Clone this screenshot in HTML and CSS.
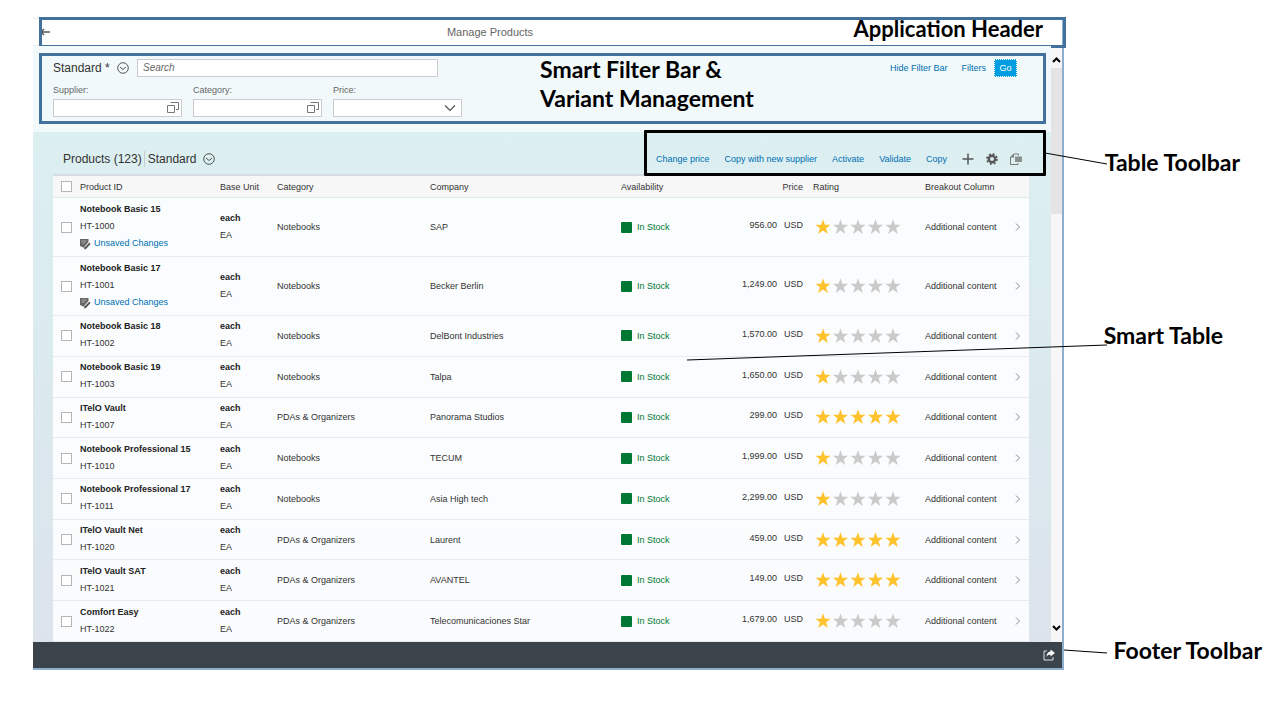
FILE: index.html
```html
<!DOCTYPE html>
<html lang="en">
<head>
<meta charset="utf-8">
<title>Manage Products</title>
<link rel="stylesheet" href="styles.css">
</head>
<body>
<svg class="defs" aria-hidden="true">
  <symbol id="star" viewBox="0 0 16 16"><path d="M8 .3 9.900 5.700H15.600L11.100 9.200 12.800 15 8 11.600 3.200 15 4.900 9.200.400 5.700H6.100Z"/></symbol>
  <symbol id="stars-1" viewBox="0 0 88 16">
    <g fill="#fec22c"><use href="#star" width="16" height="16"/></g>
    <g fill="#cacaca"><use href="#star" x="17.500" width="16" height="16"/><use href="#star" x="35" width="16" height="16"/><use href="#star" x="52.500" width="16" height="16"/><use href="#star" x="70" width="16" height="16"/></g>
  </symbol>
  <symbol id="stars-5" viewBox="0 0 88 16">
    <g fill="#fec22c"><use href="#star" width="16" height="16"/><use href="#star" x="17.500" width="16" height="16"/><use href="#star" x="35" width="16" height="16"/><use href="#star" x="52.500" width="16" height="16"/><use href="#star" x="70" width="16" height="16"/></g>
  </symbol>
  <symbol id="circle-down" viewBox="0 0 12 12"><g fill="none" stroke="#555"><circle cx="6" cy="6" r="5.300"/><path d="M3 5 6 7.500 9 5"/></g></symbol>
  <symbol id="value-help" viewBox="0 0 12 12"><path d="M.5 4.500h7v7h-7zM3.500 1.500h8v7H9" fill="none" stroke="#777"/></symbol>
  <symbol id="draft" viewBox="0 0 12 12"><path d="M0 1h8.500v3L4.500 8.500V10L0 8z" fill="#666"/><path d="M1.500 3h5M1.500 5h3.500" stroke="#aaa"/><path d="M9.500 4.500 4.500 9.500 4 11.500 6 11 10.500 6z" fill="#555"/></symbol>
  <symbol id="nav" viewBox="0 0 8 10"><path d="M2 1.500 5.500 5 2 8.500" fill="none" stroke="#8a8a8a"/></symbol>
</svg>

<div class="stage">
  <div class="app">
    <header class="app-header">
      <button class="icon-button back" aria-label="Back"><svg width="12" height="10" viewBox="0 0 12 10"><path d="M0 5h11M5 2 2 5l3 3" fill="none" stroke="#555" stroke-width="1.500"/></svg></button>
      <h1 class="app-title">Manage Products</h1>
      <div class="frame frame-header"></div>
      <span class="note note-header">Application Header</span>
    </header>

    <div class="body">
      <main class="content">
        <form class="filter-bar">
          <div class="filter-top">
            <button type="button" class="variant filter-variant">Standard *<svg class="icon-12"><use href="#circle-down"/></svg></button>
            <input class="field search" type="search" placeholder="Search" aria-label="Search">
            <div class="filter-actions">
              <button type="button" class="link-button">Hide Filter Bar</button>
              <button type="button" class="link-button">Filters</button>
              <button type="button" class="go">Go</button>
            </div>
          </div>
          <div class="filter-fields">
            <div class="filter-field">
              <label for="supplier">Supplier:</label>
              <div class="control"><input class="field" id="supplier" type="text"><svg class="icon-12 control-icon"><use href="#value-help"/></svg></div>
            </div>
            <div class="filter-field">
              <label for="category">Category:</label>
              <div class="control"><input class="field" id="category" type="text"><svg class="icon-12 control-icon"><use href="#value-help"/></svg></div>
            </div>
            <div class="filter-field">
              <label for="price">Price:</label>
              <div class="control"><select class="field" id="price"><option></option></select><svg class="icon-12 control-icon select-icon" viewBox="0 0 12 12"><path d="M1 3.500l5 5 5-5" fill="none" stroke="#555" stroke-width="1.200"/></svg></div>
            </div>
          </div>
          <div class="frame frame-filter"></div>
          <span class="note note-filter">Smart Filter Bar &amp;<br>Variant Management</span>
        </form>

        <section class="products">
          <div class="toolbar">
            <h2 class="table-title">Products (123)</h2>
            <button class="variant table-variant">Standard<svg class="icon-12"><use href="#circle-down"/></svg></button>
            <div class="toolbar-actions">
              <button class="link-button">Change price</button>
              <button class="link-button">Copy with new supplier</button>
              <button class="link-button">Activate</button>
              <button class="link-button">Validate</button>
              <button class="link-button">Copy</button>
              <div class="toolbar-icons">
                <button class="icon-button" aria-label="Add"><svg class="icon-12" viewBox="0 0 12 12"><path d="M6 .5v11M.5 6h11" stroke="#555" stroke-width="1.500"/></svg></button>
                <button class="icon-button" aria-label="Settings"><svg class="icon-12" viewBox="0 0 12 12"><circle cx="6" cy="6" r="3.200" fill="none" stroke="#555" stroke-width="2.400"/><circle cx="6" cy="6" r="5" fill="none" stroke="#555" stroke-width="1.600" stroke-dasharray="2 1.927"/></svg></button>
                <button class="icon-button" aria-label="Export"><svg class="icon-12" viewBox="0 0 12 12"><path d="M8.500 2.500V1H4L.5 4v7.500h7.500V10" fill="none" stroke="#777"/><path d="M.5 4.500H4V1z" fill="#777"/><path d="M5 3.500h7v5.500H5z" fill="#8a8f90"/></svg></button>
              </div>
            </div>
            <div class="frame frame-toolbar"></div>
          </div>
          <table class="table">
            <colgroup><col class="c-check"><col class="c-product"><col class="c-unit"><col class="c-category"><col class="c-company"><col class="c-avail"><col class="c-price"><col class="c-rating"><col class="c-extra"><col class="c-nav"></colgroup>
            <thead>
              <tr><th><input type="checkbox" class="check" aria-label="Select all"></th><th>Product ID</th><th>Base Unit</th><th>Category</th><th>Company</th><th>Availability</th><th class="head-price">Price</th><th class="head-rating">Rating</th><th>Breakout Column</th><th></th></tr>
            </thead>
            <tbody>
              <tr class="tall"><td><input type="checkbox" class="check" aria-label="Select HT-1000"></td><td class="lines"><b>Notebook Basic 15</b><span>HT-1000</span><a href="#" class="draft"><svg class="icon-12"><use href="#draft"/></svg>Unsaved Changes</a></td><td class="lines"><b>each</b><span>EA</span></td><td>Notebooks</td><td>SAP</td><td><span class="stock">In Stock</span></td><td class="price"><span>956.00</span><span>USD</span></td><td class="rating"><svg role="img" aria-label="1 of 5"><use href="#stars-1"/></svg></td><td>Additional content</td><td><svg class="nav"><use href="#nav"/></svg></td></tr>
              <tr class="tall"><td><input type="checkbox" class="check" aria-label="Select HT-1001"></td><td class="lines"><b>Notebook Basic 17</b><span>HT-1001</span><a href="#" class="draft"><svg class="icon-12"><use href="#draft"/></svg>Unsaved Changes</a></td><td class="lines"><b>each</b><span>EA</span></td><td>Notebooks</td><td>Becker Berlin</td><td><span class="stock">In Stock</span></td><td class="price"><span>1,249.00</span><span>USD</span></td><td class="rating"><svg role="img" aria-label="1 of 5"><use href="#stars-1"/></svg></td><td>Additional content</td><td><svg class="nav"><use href="#nav"/></svg></td></tr>
              <tr><td><input type="checkbox" class="check" aria-label="Select HT-1002"></td><td class="lines"><b>Notebook Basic 18</b><span>HT-1002</span></td><td class="lines"><b>each</b><span>EA</span></td><td>Notebooks</td><td>DelBont Industries</td><td><span class="stock">In Stock</span></td><td class="price"><span>1,570.00</span><span>USD</span></td><td class="rating"><svg role="img" aria-label="1 of 5"><use href="#stars-1"/></svg></td><td>Additional content</td><td><svg class="nav"><use href="#nav"/></svg></td></tr>
              <tr><td><input type="checkbox" class="check" aria-label="Select HT-1003"></td><td class="lines"><b>Notebook Basic 19</b><span>HT-1003</span></td><td class="lines"><b>each</b><span>EA</span></td><td>Notebooks</td><td>Talpa</td><td><span class="stock">In Stock</span></td><td class="price"><span>1,650.00</span><span>USD</span></td><td class="rating"><svg role="img" aria-label="1 of 5"><use href="#stars-1"/></svg></td><td>Additional content</td><td><svg class="nav"><use href="#nav"/></svg></td></tr>
              <tr><td><input type="checkbox" class="check" aria-label="Select HT-1007"></td><td class="lines"><b>ITelO Vault</b><span>HT-1007</span></td><td class="lines"><b>each</b><span>EA</span></td><td>PDAs &amp; Organizers</td><td>Panorama Studios</td><td><span class="stock">In Stock</span></td><td class="price"><span>299.00</span><span>USD</span></td><td class="rating"><svg role="img" aria-label="5 of 5"><use href="#stars-5"/></svg></td><td>Additional content</td><td><svg class="nav"><use href="#nav"/></svg></td></tr>
              <tr><td><input type="checkbox" class="check" aria-label="Select HT-1010"></td><td class="lines"><b>Notebook Professional 15</b><span>HT-1010</span></td><td class="lines"><b>each</b><span>EA</span></td><td>Notebooks</td><td>TECUM</td><td><span class="stock">In Stock</span></td><td class="price"><span>1,999.00</span><span>USD</span></td><td class="rating"><svg role="img" aria-label="1 of 5"><use href="#stars-1"/></svg></td><td>Additional content</td><td><svg class="nav"><use href="#nav"/></svg></td></tr>
              <tr><td><input type="checkbox" class="check" aria-label="Select HT-1011"></td><td class="lines"><b>Notebook Professional 17</b><span>HT-1011</span></td><td class="lines"><b>each</b><span>EA</span></td><td>Notebooks</td><td>Asia High tech</td><td><span class="stock">In Stock</span></td><td class="price"><span>2,299.00</span><span>USD</span></td><td class="rating"><svg role="img" aria-label="1 of 5"><use href="#stars-1"/></svg></td><td>Additional content</td><td><svg class="nav"><use href="#nav"/></svg></td></tr>
              <tr><td><input type="checkbox" class="check" aria-label="Select HT-1020"></td><td class="lines"><b>ITelO Vault Net</b><span>HT-1020</span></td><td class="lines"><b>each</b><span>EA</span></td><td>PDAs &amp; Organizers</td><td>Laurent</td><td><span class="stock">In Stock</span></td><td class="price"><span>459.00</span><span>USD</span></td><td class="rating"><svg role="img" aria-label="5 of 5"><use href="#stars-5"/></svg></td><td>Additional content</td><td><svg class="nav"><use href="#nav"/></svg></td></tr>
              <tr><td><input type="checkbox" class="check" aria-label="Select HT-1021"></td><td class="lines"><b>ITelO Vault SAT</b><span>HT-1021</span></td><td class="lines"><b>each</b><span>EA</span></td><td>PDAs &amp; Organizers</td><td>AVANTEL</td><td><span class="stock">In Stock</span></td><td class="price"><span>149.00</span><span>USD</span></td><td class="rating"><svg role="img" aria-label="5 of 5"><use href="#stars-5"/></svg></td><td>Additional content</td><td><svg class="nav"><use href="#nav"/></svg></td></tr>
              <tr><td><input type="checkbox" class="check" aria-label="Select HT-1022"></td><td class="lines"><b>Comfort Easy</b><span>HT-1022</span></td><td class="lines"><b>each</b><span>EA</span></td><td>PDAs &amp; Organizers</td><td>Telecomunicaciones Star</td><td><span class="stock">In Stock</span></td><td class="price"><span>1,679.00</span><span>USD</span></td><td class="rating"><svg role="img" aria-label="1 of 5"><use href="#stars-1"/></svg></td><td>Additional content</td><td><svg class="nav"><use href="#nav"/></svg></td></tr>
            </tbody>
          </table>
        </section>
      </main>
      <div class="scrollbar" aria-hidden="true">
        <svg class="arrow" viewBox="0 0 11 8"><path d="M2 6 5.500 2.500 9 6" fill="none" stroke="#000" stroke-width="2"/></svg>
        <div class="track"><div class="thumb"></div></div>
        <svg class="arrow" viewBox="0 0 11 8"><path d="M2 2 5.500 5.500 9 2" fill="none" stroke="#000" stroke-width="2"/></svg>
      </div>
    </div>

    <footer class="footer">
      <button class="icon-button" aria-label="Share"><svg width="12" height="12" viewBox="0 0 12 12"><path d="M4 2H1v9h9V8" fill="none" stroke="#ddd"/><path d="M7.500.5 12 4 7.500 7.500v-2C5.500 5.500 4.300 6.300 3.500 8 3.500 5 4.800 2.700 7.500 2.500z" fill="#fff"/></svg></button>
    </footer>
  </div>

  <svg class="leaders" viewBox="0 0 620 720" aria-hidden="true"><g stroke="#000"><path d="M385 153l62 11"/><path d="M27 360l420-15"/><path d="M404 650l43 3"/></g></svg>
  <span class="note note-toolbar">Table Toolbar</span>
  <span class="note note-table">Smart Table</span>
  <span class="note note-footer">Footer Toolbar</span>
</div>
</body>
</html>
```

FILE: styles.css
```css
* { box-sizing: border-box; }
body { margin: 0; background: #fff; font-family: "Liberation Sans", Arial, sans-serif; font-size: 9px; color: #333; }
button, input, select { font: inherit; color: inherit; margin: 0; }
button { border: 0; padding: 0; background: none; cursor: pointer; }
.defs { position: absolute; width: 0; height: 0; }
.stage { position: relative; display: flex; min-height: 100vh; padding: 18px 216px 50px 33px; }
.app { flex: 1; min-width: 0; display: flex; flex-direction: column; border: solid #8bafcc; border-width: 0 2px 2px 0; }
.icon-12 { width: 12px; height: 12px; flex: none; }
.icon-button { display: flex; }

/* Header */
.app-header { position: relative; display: flex; align-items: center; height: 28px; border: solid #e8ecee; border-width: 1px 0; padding-left: 6px; }
.app-title { flex: 1; margin: 0; padding-right: 133px; text-align: center; font-size: 11px; font-weight: 400; color: #666; }

.body { flex: 1; display: flex; }
.content { flex: 1; min-width: 0; display: flex; flex-direction: column; }

/* Filter bar */
.filter-bar { position: relative; display: flex; flex-direction: column; gap: 4px; padding: 13px 34px 15px 20px; background: #f1f9fb; }
.filter-top { display: flex; align-items: center; height: 18px; }
.variant { display: flex; align-items: center; gap: 7px; font-size: 12px; }
.filter-variant { width: 84px; }
.field { width: 100%; height: 18px; padding: 0 5px; border: 1px solid #ccc; border-radius: 0; background: #fff; outline: 0; appearance: none; }
.search { width: 301px; }
.search::placeholder { font-size: 10px; font-style: italic; color: #666; opacity: 1; }
.filter-actions { margin-left: auto; display: flex; align-items: center; gap: 14px; }
.link-button { color: #0070b1; white-space: nowrap; }
.go { width: 23px; height: 18px; margin-left: -6px; border: 1px dotted #fff; background: #009de0; color: #fff; }
.filter-fields { display: flex; gap: 11px; }
.filter-field { width: 129px; color: #666; }
.filter-field label { display: block; line-height: 18px; }
.control { position: relative; display: flex; }
.control-icon { position: absolute; right: 3px; top: 2px; pointer-events: none; }
.select-icon { right: 6px; top: 3px; }

/* Products */
.products { flex: 1; display: flex; flex-direction: column; padding: 0 22px 0 20px; background: linear-gradient(#dceff1, #dbeaef 45%, #dce3ec); }
.toolbar { position: relative; display: flex; align-items: center; height: 42px; padding: 12px 7px 0 10px; }
.table-title { margin: 0; padding-right: 2px; border-right: 1px solid #c5cfd2; font-size: 12px; line-height: 16px; font-weight: 400; }
.table-variant { padding-left: 3px; }
.toolbar-actions { margin-left: auto; display: flex; align-items: center; gap: 15px; }
.toolbar-icons { display: flex; gap: 12px; }

.table { flex: 1; width: 100%; table-layout: fixed; border-collapse: separate; border-spacing: 0; border-top: 2px solid #d5dde0; }
.c-check { width: 27px; }
.c-product { width: 140px; }
.c-unit { width: 57px; }
.c-category { width: 153px; }
.c-avail { width: 110px; }
.c-price { width: 72px; }
.c-rating { width: 122px; }
.c-extra { width: 86px; }
.c-nav { width: 18px; }
.table th { height: 22px; padding: 0; background: #f7f7f7; border-bottom: 1px solid #e5e8ea; text-align: left; font-weight: 400; }
.table td { height: 40px; padding: 0; background: rgba(255, 255, 255, .85); border-bottom: 1px solid #e8ebed; vertical-align: middle; white-space: nowrap; }
.table .tall td { height: 58px; }
.check { display: block; width: 11px; height: 11px; margin-left: 8px; border: 1px solid #b5b5b5; background: #fff; appearance: none; }
.table .lines { padding-bottom: 1px; }
.lines > * { display: block; line-height: 17px; }
.lines b { color: #222; }
.table .draft { display: flex; align-items: center; gap: 2px; color: #0070b1; text-decoration: none; }
.stock { display: flex; align-items: center; gap: 5px; color: #007833; }
.stock::before { content: ""; width: 11px; height: 11px; border-radius: 1px; background: #007833; }
.table .head-price { text-align: right; }
.table .head-rating { padding-left: 10px; }
.table .price { padding-bottom: 4px; text-align: right; }
.price span + span { margin-left: 7px; }
.table .rating { padding-left: 12px; }
.rating svg { display: block; width: 88px; height: 16px; }
.nav { display: block; width: 8px; height: 10px; margin-left: 3px; }

/* Scrollbar */
.scrollbar { width: 11px; display: flex; flex-direction: column; background: #f6f6f6; padding: 10px 0; }
.arrow { width: 11px; height: 8px; }
.track { flex: 1; padding-top: 4px; }
.thumb { height: 146px; background: #e4e4e4; }

.footer { display: flex; align-items: center; justify-content: flex-end; height: 26px; padding-right: 7px; background: #3c444b; }

/* Annotations */
.frame { position: absolute; border: 3px solid #41719c; pointer-events: none; }
.frame-header { left: 6px; right: -4px; top: -2px; height: 31px; }
.frame-filter { left: 6px; right: 5px; top: 7px; bottom: 8px; }
.frame-toolbar { width: 402px; right: -17px; top: -2px; bottom: -2px; border-color: #000; border-radius: 1px; }
.note { position: absolute; font-family: Lato, sans-serif; font-size: 23px; line-height: 29px; font-weight: 700; color: #000; white-space: nowrap; }
.note-header { right: 19px; top: -5px; font-size: 22px; }
.note-filter { left: 507px; top: 9px; }
.leaders { position: absolute; top: 0; right: 0; width: 620px; height: 720px; pointer-events: none; }
.note-toolbar { right: 40px; top: 148px; }
.note-table { right: 57px; top: 321px; }
.note-footer { right: 18px; top: 636px; }
```
